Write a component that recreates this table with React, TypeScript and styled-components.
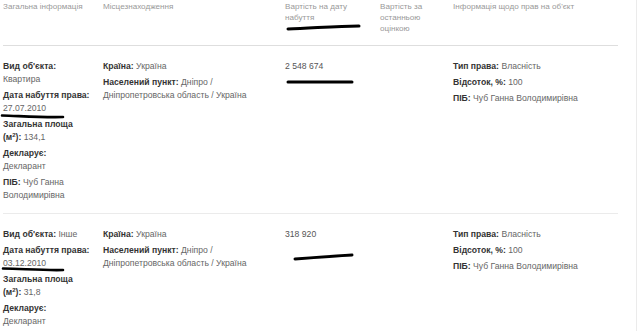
import React from "react";
import styled, { createGlobalStyle } from "styled-components";

const GlobalStyle = createGlobalStyle`
  html, body {
    margin: 0;
    padding: 0;
    background: #fff;
  }
  body {
    font-family: "Liberation Sans", Arial, sans-serif;
  }
`;

type Field = { label?: React.ReactNode; value: React.ReactNode };

type Row = {
  general: Field[];
  location: Field[];
  cost: string;
  lastCost: string;
  rights: Field[];
};

const area = (
  <>
    Загальна площа (м<sup>2</sup>):
  </>
);

const rows: Row[] = [
  {
    general: [
      { label: "Вид об'єкта:", value: <><br />Квартира</> },
      { label: "Дата набуття права:", value: <><br />27.07.2010</> },
      { label: area, value: " 134,1" },
      { label: "Декларує:", value: <><br />Декларант</> },
      { label: "ПІБ:", value: " Чуб Ганна Володимирівна" },
    ],
    location: [
      { label: "Країна:", value: " Україна" },
      {
        label: "Населений пункт:",
        value: " Дніпро / Дніпропетровська область / Україна",
      },
    ],
    cost: "2 548 674",
    lastCost: "",
    rights: [
      { label: "Тип права:", value: " Власність" },
      { label: "Відсоток, %:", value: " 100" },
      { label: "ПІБ:", value: " Чуб Ганна Володимирівна" },
    ],
  },
  {
    general: [
      { label: "Вид об'єкта:", value: " Інше" },
      { label: "Дата набуття права:", value: <><br />03.12.2010</> },
      { label: area, value: " 31,8" },
      { label: "Декларує:", value: <><br />Декларант</> },
      { label: "ПІБ:", value: " Чуб Ганна Володимирівна" },
    ],
    location: [
      { label: "Країна:", value: " Україна" },
      {
        label: "Населений пункт:",
        value: " Дніпро / Дніпропетровська область / Україна",
      },
    ],
    cost: "318 920",
    lastCost: "",
    rights: [
      { label: "Тип права:", value: " Власність" },
      { label: "Відсоток, %:", value: " 100" },
      { label: "ПІБ:", value: " Чуб Ганна Володимирівна" },
    ],
  },
];

const Fields = ({ list }: { list: Field[] }) => (
  <>
    {list.map((f, j) => (
      <Item key={j}>
        <Label>{f.label}</Label>
        {f.value}
      </Item>
    ))}
  </>
);

const App = () => {
  return (
    <Page>
      <GlobalStyle />
      <Table>
        <HeadRow>
          <HeadCell>Загальна інформація</HeadCell>
          <HeadCell>Місцезнаходження</HeadCell>
          <HeadCell>Вартість на дату набуття</HeadCell>
          <HeadCell>Вартість за останньою оцінкою</HeadCell>
          <HeadCell>Інформація щодо прав на об'єкт</HeadCell>
        </HeadRow>
        {rows.map((r, i) => (
          <BodyRow key={i}>
            <Cell $gap={12}>
              <Fields list={r.general} />
            </Cell>
            <Cell>
              <Fields list={r.location} />
            </Cell>
            <Cell>
              <Amount>{r.cost}</Amount>
            </Cell>
            <Cell>{r.lastCost}</Cell>
            <Cell>
              <Fields list={r.rights} />
            </Cell>
          </BodyRow>
        ))}
      </Table>

      {/* marker strokes drawn over the screenshot */}
      <Marks viewBox="0 0 640 331" width="640" height="331">
        <path d="M288 29 C 310 28.5, 335 26, 359 26" strokeWidth="3" />
        <path d="M2 115.5 C 20 116, 40 117.5, 63 117" strokeWidth="2.6" />
        <path d="M288 82 L 352 82" strokeWidth="3" />
        <path d="M3 268.5 C 25 269, 45 270.5, 63 270" strokeWidth="2.6" />
        <path d="M295 259 C 315 257.5, 335 256, 352 255" strokeWidth="3" />
      </Marks>
    </Page>
  );
};

const Page = styled.div`
  position: relative;
  width: 636px;
  height: 331px;
  overflow: hidden;
  border-right: 1px solid #ebebeb;
  background: #fff;
`;

const Table = styled.div`
  width: 618px;
  padding-left: 3px;
  box-sizing: border-box;
  color: #666;
  font-size: 8.65px;
  line-height: 13px;
`;

const Grid = styled.div`
  display: grid;
  grid-template-columns: 100px 182px 95px 73px 1fr;
`;

const HeadRow = styled(Grid)`
  padding: 1px 0 0;
  height: 46px;
  box-sizing: border-box;
  border-bottom: 1px solid #dedede;
`;

const HeadCell = styled.div`
  color: #999;
  font-size: 8.1px;
  line-height: 11px;
  padding-right: 12px;
`;

const BodyRow = styled(Grid)`
  padding: 14px 0 8px;
  border-bottom: 1px solid #ebebeb;
`;

const Cell = styled.div<{ $gap?: number }>`
  padding-right: ${(p) => p.$gap ?? 6}px;
`;

const Item = styled.div`
  margin-bottom: 3px;

  sup {
    font-size: 6px;
    line-height: 0;
    vertical-align: 3px;
  }
`;

const Label = styled.b`
  color: #333;
  font-weight: bold;
`;

const Amount = styled.div`
  color: #555;
`;

const Marks = styled.svg`
  position: absolute;
  left: 0;
  top: 0;
  pointer-events: none;

  path {
    fill: none;
    stroke: #000;
    stroke-linecap: round;
  }
`;

export default App;
